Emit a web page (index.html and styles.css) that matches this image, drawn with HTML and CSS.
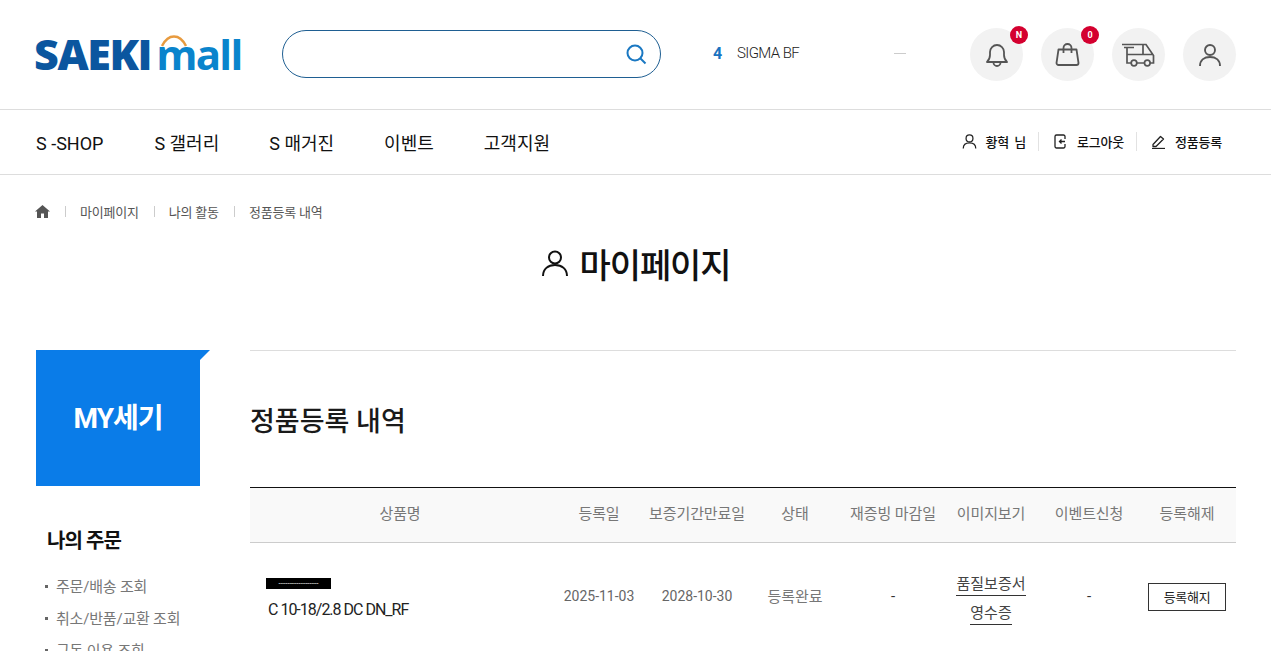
FILE: index.html
```html
<!DOCTYPE html>
<html lang="ko">
<head>
    <meta charset="UTF-8">
    <meta name="viewport" content="width=device-width, initial-scale=1.0">
    <title>SAEKI mall - 마이페이지</title>
    <link rel="stylesheet" href="styles.css">
</head>
<body>
<div class="page">
    <header class="top">
        <a class="logo" href="#">
            <span class="logo-saeki">SAEKI</span>
            <span class="logo-mall">mall
                <svg class="logo-arc" width="26" height="12" viewBox="0 0 26 12"><path d="M1 11C5 3 9 1.500 13 1.500S21 3 25 11" fill="none" stroke="#e89b3f" stroke-width="2.500"/></svg>
            </span>
        </a>
        <form class="search">
            <input class="search-input" type="text">
            <svg class="search-icon" width="22" height="22" viewBox="0 0 22 22" fill="none" stroke="#1a78c2" stroke-width="2"><circle cx="10" cy="10" r="7.500"/><path d="M15.500 15.500L20.500 20.500"/></svg>
        </form>
        <div class="rank">
            <b class="rank-num">4</b>
            <span class="rank-name">SIGMA BF</span>
            <span class="rank-dash"></span>
        </div>
        <div class="quick">
            <a class="quick-btn" href="#">
                <svg width="26" height="28" viewBox="0 0 26 28" fill="none" stroke="#555" stroke-width="1.800"><path d="M3 21c2-2 3-4 3-7V11a7 7 0 0 1 14 0v3c0 3 1 5 3 7z" stroke-linejoin="round"/><path d="M9.500 21.500a3.500 3.500 0 0 0 7 0"/></svg>
                <span class="badge">N</span>
            </a>
            <a class="quick-btn" href="#">
                <svg width="25" height="23" viewBox="0 0 25 23" fill="none" stroke="#555" stroke-width="1.800"><path d="M3.500 6.500h18L23.500 20a2 2 0 0 1-2 2h-18a2 2 0 0 1-2-2z" stroke-linejoin="round"/><path d="M8.500 10V5a4 4 0 0 1 8 0v5"/></svg>
                <span class="badge">0</span>
            </a>
            <a class="quick-btn" href="#">
                <svg width="33" height="24" viewBox="0 0 33 24" fill="none" stroke="#555" stroke-width="1.700"><path d="M0 1.500h24l7.500 11V20h-3.500M22.500 20h-7.500M9 20H5V4M2 4.500h10M5 11.500h16V2M21 11.500h10"/><circle cx="12" cy="20" r="2.800"/><circle cx="25.300" cy="20" r="2.800"/></svg>
            </a>
            <a class="quick-btn" href="#">
                <svg width="24" height="24" viewBox="0 0 24 24" fill="none" stroke="#555" stroke-width="1.900"><circle cx="12" cy="7" r="5"/><path d="M2 23c0-6 4.500-9 10-9s10 3 10 9"/></svg>
            </a>
        </div>
    </header>

    <nav class="gnb">
        <ul class="gnb-menu">
            <li><a href="#">S -SHOP</a></li>
            <li><a href="#">S 갤러리</a></li>
            <li><a href="#">S 매거진</a></li>
            <li><a href="#">이벤트</a></li>
            <li><a href="#">고객지원</a></li>
        </ul>
        <ul class="gnb-util">
            <li>
                <svg width="15" height="15" viewBox="0 0 24 24" fill="none" stroke="#222" stroke-width="2"><circle cx="12" cy="7" r="5.500"/><path d="M2 23c0-6 4.500-9 10-9s10 3 10 9"/></svg>
                <a href="#">황혁 님</a>
            </li>
            <li>
                <svg width="15" height="15" viewBox="0 0 15 15" fill="none" stroke="#222" stroke-width="1.300"><path d="M12 5V2.500A1.500 1.500 0 0 0 10.500 1h-7A1.500 1.500 0 0 0 2 2.500v10A1.500 1.500 0 0 0 3.500 14h7a1.500 1.500 0 0 0 1.500-1.500V10"/><path d="M12 7.500H6.500M8.500 5.500l-2 2 2 2"/></svg>
                <a href="#">로그아웃</a>
            </li>
            <li>
                <svg width="15" height="15" viewBox="0 0 15 15" fill="none" stroke="#222" stroke-width="1.300"><path d="M2 10.500L9.500 2.500l3 2.500-7.500 7.500H2z" stroke-linejoin="round"/><path d="M1 14.500h13"/></svg>
                <a href="#">정품등록</a>
            </li>
        </ul>
    </nav>

    <div class="crumbs">
        <svg width="15" height="13" viewBox="0 0 15 13" fill="#555"><path d="M7.500 0L0 6.500h2V13h4V8.500h3V13h4V6.500h2z"/></svg>
        <span class="crumb">마이페이지</span>
        <span class="crumb">나의 활동</span>
        <span class="crumb">정품등록 내역</span>
    </div>

    <h1 class="page-title">
        <svg width="28" height="28" viewBox="0 0 28 28" fill="none" stroke="#111" stroke-width="2"><circle cx="14" cy="8.500" r="6"/><path d="M2 27c0-7 5-11 12-11s12 4 12 11"/></svg>
        마이페이지
    </h1>

    <div class="content">
        <aside class="side">
            <div class="side-head">MY세기</div>
            <h3 class="side-title">나의 주문</h3>
            <ul class="side-list">
                <li>주문/배송 조회</li>
                <li>취소/반품/교환 조회</li>
                <li>구독 이용 조회</li>
            </ul>
        </aside>
        <main class="main">
            <h2 class="main-title">정품등록 내역</h2>
            <table class="reg-table">
                <colgroup>
                    <col class="col-name">
                    <col span="7">
                </colgroup>
                <thead>
                    <tr>
                        <th>상품명</th>
                        <th>등록일</th>
                        <th>보증기간만료일</th>
                        <th>상태</th>
                        <th>재증빙 마감일</th>
                        <th>이미지보기</th>
                        <th>이벤트신청</th>
                        <th>등록해제</th>
                    </tr>
                </thead>
                <tbody>
                    <tr>
                        <td class="prod">
                            <span class="prod-tag">------------------</span>
                            <span class="prod-name">C 10-18/2.8 DC DN_RF</span>
                        </td>
                        <td class="date">2025-11-03</td>
                        <td class="date">2028-10-30</td>
                        <td>등록완료</td>
                        <td class="dash">-</td>
                        <td class="links">
                            <a href="#">품질보증서</a>
                            <a href="#">영수증</a>
                        </td>
                        <td class="dash">-</td>
                        <td class="off"><button class="btn-off" type="button">등록해지</button></td>
                    </tr>
                </tbody>
            </table>
        </main>
    </div>
</div>
</body>
</html>
```

FILE: styles.css
```css
* {
    box-sizing: border-box;
}

html, body {
    margin: 0;
    padding: 0;
}

body {
    font-family: Roboto, "Noto Sans CJK KR", sans-serif;
    color: #222;
    background-color: #fff;
}

a {
    color: inherit;
    text-decoration: none;
}

ul {
    list-style: none;
    margin: 0;
    padding: 0;
}

.page {
    height: 651px;
    overflow: hidden;
}

/* top */
.top {
    display: flex;
    align-items: center;
    height: 110px;
    padding: 0 34px 1px 36px;
    border-bottom: 1px solid #ddd;
}

.logo {
    display: flex;
    align-items: baseline;
    width: 246px;
    height: 44px;
    margin-left: -2px;
    margin-right: 2px;
    line-height: 44px;
    white-space: nowrap;
}

.logo-saeki {
    font-family: "Open Sans", sans-serif;
    font-weight: 800;
    font-size: 43px;
    letter-spacing: -1.400px;
    color: #0b569f;
}

.logo-mall {
    position: relative;
    margin-left: 5px;
    font-family: "Open Sans", sans-serif;
    font-weight: 700;
    font-size: 42px;
    letter-spacing: -1.700px;
    color: #0a84cc;
}

.logo-arc {
    position: absolute;
    left: 5px;
    top: 3px;
}

.search {
    position: relative;
    width: 379px;
    height: 48px;
    border: 1px solid #1f5f92;
    border-radius: 24px;
}

.search-input {
    width: 330px;
    height: 46px;
    border: 0;
    outline: none;
    background: transparent;
}

.search-icon {
    position: absolute;
    right: 13px;
    top: 12px;
}

.rank {
    display: flex;
    align-items: center;
    width: 309px;
    margin-bottom: 2px;
    padding-left: 52px;
}

.rank-num {
    width: 24px;
    font-size: 16px;
    color: #1a73c0;
}

.rank-name {
    width: 157px;
    font-size: 15px;
    font-weight: 300;
    letter-spacing: -0.600px;
    color: #222;
}

.rank-dash {
    width: 12px;
    height: 1px;
    background-color: #ccc;
}

.quick {
    display: flex;
    gap: 18px;
    margin-top: 1px;
}

.quick-btn {
    position: relative;
    display: flex;
    align-items: center;
    justify-content: center;
    width: 53px;
    height: 53px;
    border-radius: 50%;
    background-color: #f2f2f2;
}

.badge {
    position: absolute;
    top: -2px;
    right: -5px;
    width: 18px;
    height: 18px;
    border-radius: 50%;
    background-color: #d4002f;
    color: #fff;
    font-size: 9px;
    font-weight: 700;
    line-height: 18px;
    text-align: center;
}

/* nav */
.gnb {
    display: flex;
    justify-content: space-between;
    align-items: center;
    height: 65px;
    padding: 0 35px 0 36px;
    border-bottom: 1px solid #ddd;
}

.gnb-menu {
    display: flex;
    gap: 50px;
    margin-top: 3px;
    font-size: 18px;
    line-height: 26px;
    color: #111;
}

.gnb-menu li:first-child {
    margin-right: 1px;
}

.gnb-util {
    display: flex;
    margin-bottom: 2px;
    font-size: 13px;
    font-weight: 500;
    letter-spacing: -0.200px;
    word-spacing: 2px;
    color: #111;
}

.gnb-util li {
    display: flex;
    align-items: center;
    gap: 9px;
    padding: 0 12px 0 14px;
    border-right: 1px solid #e2e2e2;
}

.gnb-util li:last-child {
    padding-right: 14px;
    border-right: 0;
}

/* breadcrumb */
.crumbs {
    display: flex;
    align-items: center;
    height: 16px;
    margin: 28px 0 0 35px;
    font-size: 13px;
    letter-spacing: -0.200px;
    color: #555;
}

.crumb {
    position: relative;
    margin-left: 30px;
}

.crumb:before {
    content: "";
    position: absolute;
    left: -15px;
    top: 4px;
    width: 1px;
    height: 11px;
    background-color: #ccc;
}

.page-title {
    display: flex;
    align-items: center;
    justify-content: center;
    gap: 11px;
    height: 50px;
    margin: 19px 0 0;
    font-size: 34px;
    font-weight: 500;
    letter-spacing: -1.100px;
    color: #111;
}

/* content */
.content {
    display: flex;
    margin-top: 62px;
    padding: 0 35px 0 36px;
}

.side {
    flex: none;
    width: 214px;
}

.side-head {
    position: relative;
    width: 164px;
    height: 136px;
    background-color: #0a7ce8;
    color: #fff;
    font-size: 28px;
    font-weight: 700;
    letter-spacing: -1px;
    line-height: 138px;
    text-align: center;
}

.side-head:after {
    content: "";
    position: absolute;
    left: 164px;
    top: 0;
    border-top: 10px solid #0a7ce8;
    border-right: 10px solid transparent;
}

.side-title {
    margin: 40px 0 0 11px;
    font-size: 20px;
    font-weight: 700;
    letter-spacing: -0.900px;
    line-height: 30px;
    color: #111;
}

.side-list {
    margin: 15px 0 0 9px;
    font-size: 15px;
    letter-spacing: -0.200px;
    color: #777;
}

.side-list li {
    position: relative;
    height: 32px;
    padding-left: 11px;
    line-height: 32px;
}

.side-list li:before {
    content: "";
    position: absolute;
    left: 0;
    top: 14px;
    width: 3px;
    height: 3px;
    background-color: #666;
}

.main {
    flex: 1;
    border-top: 1px solid #ddd;
}

.main-title {
    height: 136px;
    margin: 0;
    padding-top: 49px;
    font-size: 27px;
    font-weight: 500;
    line-height: 44px;
    color: #1a1a1a;
}

.reg-table {
    width: 100%;
    border-collapse: collapse;
    table-layout: fixed;
    border-top: 1px solid #111;
    font-size: 15px;
}

.col-name {
    width: 300px;
}

.reg-table th {
    height: 55px;
    padding: 0 0 5px;
    background-color: #f9f9f9;
    border-bottom: 1px solid #ccc;
    font-weight: 400;
    letter-spacing: -0.100px;
    color: #777;
}

.reg-table td {
    height: 106px;
    padding: 0;
    text-align: center;
    color: #777;
}

.reg-table td.prod {
    padding: 6px 0 0 16px;
    text-align: left;
}

.prod-tag {
    display: block;
    width: 65px;
    height: 11px;
    overflow: hidden;
    background-color: #000;
    color: #fff;
    font-size: 8px;
    line-height: 11px;
    text-align: center;
    white-space: nowrap;
}

.prod-name {
    display: block;
    margin: 11px 0 0 2px;
    font-size: 16px;
    letter-spacing: -1px;
    color: #222;
}

.reg-table td.date {
    font-size: 14px;
    color: #666;
}

.reg-table td.dash {
    color: #333;
}

.reg-table td.links {
    padding-top: 7px;
}

.links a {
    display: table;
    margin: 0 auto 7px;
    border-bottom: 1px solid #333;
    line-height: 21px;
    color: #444;
}

.links a:last-child {
    margin-bottom: 0;
}

.reg-table td.off {
    padding-top: 2px;
}

.btn-off {
    width: 78px;
    height: 28px;
    padding: 0;
    border: 1px solid #333;
    background-color: #fff;
    font-family: inherit;
    font-size: 13px;
    letter-spacing: -0.300px;
    color: #222;
}
```
